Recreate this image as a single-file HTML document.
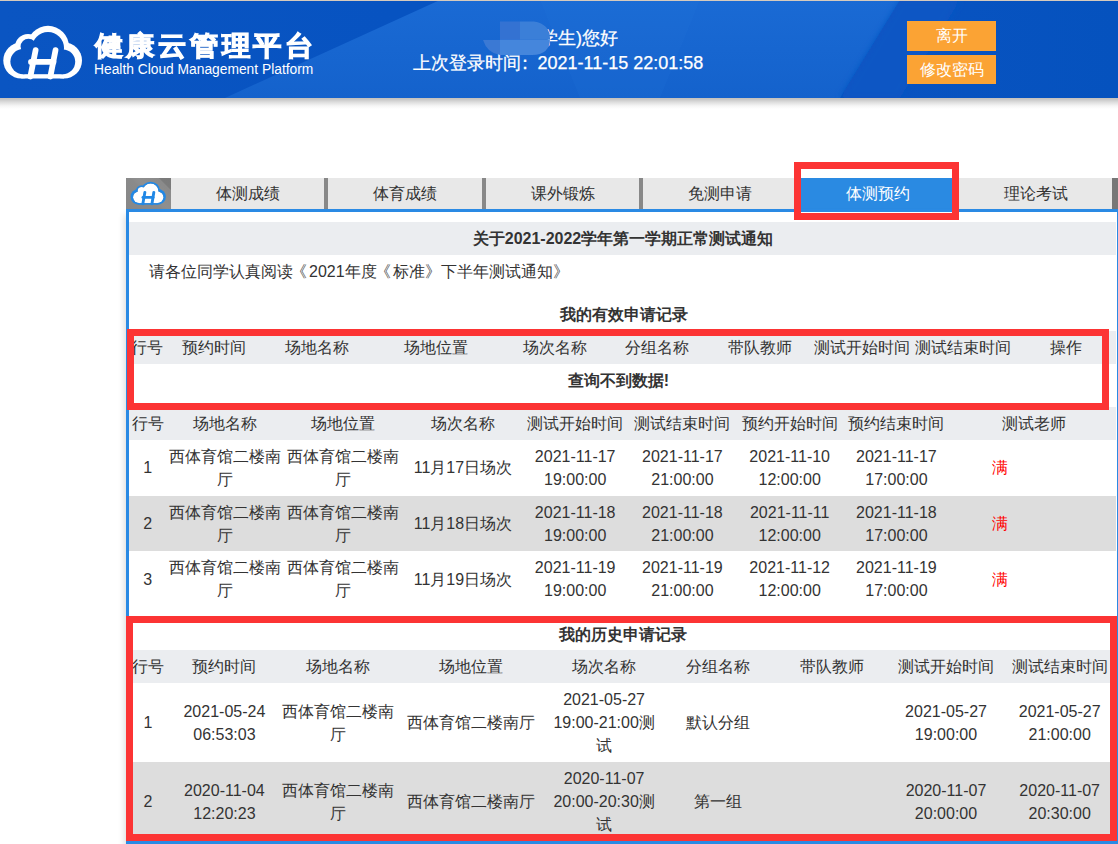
<!DOCTYPE html>
<html><head><meta charset="utf-8">
<style>
*{margin:0;padding:0;box-sizing:border-box}
html,body{width:1118px;height:844px;overflow:hidden;background:#fff}
body{font-family:"Liberation Sans",sans-serif;color:#333;font-size:16px;position:relative}
.abs{position:absolute}
#hdr{position:absolute;left:0;top:0;width:1118px;height:98px;background:#0a57c3;border-top:1px solid #d6cabd;overflow:hidden}
#hdrsh{position:absolute;left:0;top:98px;width:1118px;height:11px;background:linear-gradient(#c9c1b8 0px,#c4c4c4 1px,#dcdcdc 4px,#f6f6f6 8px,#fff 11px)}
.ttl{position:absolute;left:94.5px;top:26px;font-size:28px;font-weight:bold;color:#fff;letter-spacing:3.75px;-webkit-text-stroke:1.1px #fff;transform:scaleY(0.95);transform-origin:0 0;white-space:nowrap;line-height:40px}
.eng{position:absolute;left:94px;top:61px;font-size:13.8px;color:#fff;white-space:nowrap;line-height:16px}
.wel{position:absolute;color:#fff;font-size:18px;white-space:nowrap;line-height:20px;-webkit-text-stroke:0.25px #fff}
.btn{position:absolute;left:907px;width:89px;background:#fba334;color:#fff;font-size:16px;text-align:center}
/* tabs */
#tabs{position:absolute;left:126px;top:178px;height:31px;width:992px}
.tab{position:absolute;top:0;height:31px;background:#e8e8e8;text-align:center;line-height:31px;font-size:16px;color:#333}
.sep{position:absolute;top:0;height:31px;width:4px;background:#888}
#box{position:absolute;left:126px;top:209px;width:994px;height:635px;border:3px solid #2a8ae4;background:#fff;box-shadow:-1px 6px 7px rgba(0,0,0,0.16)}
.gbar{position:absolute;background:#ebedf0}
.row2{position:absolute;background:#dddddd}
.t{position:absolute;white-space:nowrap;text-align:center;line-height:23px;height:23px;width:320px;font-size:16px;color:#333}
.b{font-weight:bold}
.red{position:absolute;border:7px solid #fc3434}
.lb{position:relative;left:-2px}.rb{position:relative;left:0px}
</style></head>
<body>
<div id="hdr">
<svg class="abs" style="left:0;top:-1px" width="1118" height="98" viewBox="0 0 1118 98">
<defs><linearGradient id="hg" x1="0" x2="1" y1="0" y2="0">
<stop offset="0" stop-color="#0a55c2"/><stop offset="0.35" stop-color="#0753c1"/><stop offset="0.8" stop-color="#0853c1"/><stop offset="1" stop-color="#0552be"/></linearGradient>
<linearGradient id="hl" x1="0" x2="0" y1="0" y2="1"><stop offset="0" stop-color="#1a6ad4"/><stop offset="1" stop-color="#1462cc"/></linearGradient></defs>
<filter id="bl" x="-10%" y="-50%" width="120%" height="200%"><feGaussianBlur stdDeviation="3"/></filter>
<rect width="1118" height="98" fill="url(#hg)"/>
<polygon points="225,98 440,0 900,0 840,98" fill="url(#hl)"/>
<polygon points="840,98 900,0 960,0 900,98" fill="#0b57c4" filter="url(#bl)"/>
<polygon points="540,0 700,0 660,98 580,98" fill="#2a78dc" opacity="0.12"/>
</svg>
<svg class="abs" style="left:0;top:19px" width="90" height="70" viewBox="0 20 90 70">
<defs><mask id="cm" maskUnits="userSpaceOnUse" x="0" y="0" width="90" height="100">
<g fill="#fff"><circle cx="21.3" cy="60.5" r="18"/><circle cx="64" cy="60.5" r="18"/><circle cx="28" cy="47" r="13"/><circle cx="48" cy="46.8" r="21"/><rect x="21.3" y="46.8" width="42.7" height="31.7"/></g>
<g fill="#000"><circle cx="23" cy="61.6" r="12.6"/><circle cx="62.8" cy="61.8" r="12.4"/><circle cx="28.5" cy="46.6" r="7.9"/><circle cx="48" cy="48" r="16"/><rect x="23" y="48" width="39.8" height="26.2"/></g>
</mask></defs>
<rect x="0" y="20" width="90" height="70" fill="#fff" mask="url(#cm)"/>
<path d="M35.6,50.2 L30.4,76.5 M55.5,50.2 L50.4,76.5" stroke="#fff" stroke-width="5.8" stroke-linecap="round" fill="none"/>
<path d="M31,61.9 L53.5,61.9" stroke="#fff" stroke-width="5.8" stroke-linecap="round" fill="none"/>
</svg>
<div class="ttl">健康云管理平台</div>
<div class="eng">Health Cloud Management Platform</div>

<div class="wel" style="left:540px;top:27px">学生)您好</div>
<div class="wel" style="left:413px;top:52px">上次登录时间<span style="display:inline-block;width:16.5px;overflow:visible"><span style="position:relative;left:-5px">：</span></span>2021-11-15 22:01:58</div>
<svg class="abs" style="left:0;top:-1px" width="1118" height="98" viewBox="0 0 1118 98">
<defs><clipPath id="bc"><path d="M500,21.4 L534,21.4 Q550,24 550,38.6 Q550,55 532,55 L500,55 Q487,53 483,40 L500,40 Z"/></clipPath></defs>
<g clip-path="url(#bc)">
<rect x="480" y="20" width="20" height="40" fill="#3b79d4"/>
<rect x="500" y="20" width="20" height="19.7" fill="#3472d2"/>
<rect x="520" y="20" width="35" height="19.7" fill="#3b7fd8"/>
<rect x="500" y="39.7" width="55" height="20" fill="#4586dc"/>
</g></svg>
<div class="btn" style="top:20px;height:30px;line-height:30px">离开</div>
<div class="btn" style="top:54px;height:29px;line-height:29px">修改密码</div>
</div>
<div id="hdrsh"></div>

<div id="tabs">
<div class="tab" style="left:0;width:45px;background:linear-gradient(45deg,#878787 0%,#8a8a8a 45%,#8f8f8f 55%,#8a8a8a 83%,#7b7b7b 85%,#7a7a7a 100%)">
<svg class="abs" style="left:2.7px;top:2.1px" width="40.5" height="26.2" viewBox="0 22 90 60" preserveAspectRatio="none">
<defs><mask id="cm2" maskUnits="userSpaceOnUse" x="0" y="0" width="90" height="100">
<g fill="#fff"><circle cx="21.3" cy="60.5" r="18"/><circle cx="64" cy="60.5" r="18"/><circle cx="28" cy="47" r="13"/><circle cx="48" cy="46.8" r="21"/><rect x="21.3" y="46.8" width="42.7" height="31.7"/></g>
<g fill="#000"><circle cx="22.3" cy="61.6" r="13.2"/><circle cx="63.3" cy="61.6" r="13.2"/><circle cx="28" cy="47" r="8.8"/><circle cx="48" cy="47.6" r="17.4"/><rect x="22.3" y="47.6" width="41" height="27.4"/></g>
</mask></defs>
<g fill="#fff"><circle cx="22.3" cy="61.6" r="13.5"/><circle cx="63.3" cy="61.6" r="13.5"/><circle cx="28" cy="47" r="9"/><circle cx="48" cy="47.6" r="17.7"/><rect x="22.3" y="47.6" width="41" height="27.7"/></g>
<rect x="0" y="20" width="90" height="70" fill="#2188e6" mask="url(#cm2)"/>
<path d="M35.3,50.2 L30.8,76.5 M55.2,50.2 L51,76.5" stroke="#2188e6" stroke-width="6.4" stroke-linecap="round" fill="none"/>
<path d="M31,61.9 L53.5,61.9" stroke="#2188e6" stroke-width="6.4" stroke-linecap="round" fill="none"/>
</svg>
</div>
<div class="tab" style="left:45px;width:153px">体测成绩</div>
<div class="sep" style="left:198px"></div>
<div class="tab" style="left:202px;width:154px">体育成绩</div>
<div class="sep" style="left:356px"></div>
<div class="tab" style="left:360px;width:153px">课外锻炼</div>
<div class="sep" style="left:513px"></div>
<div class="tab" style="left:517px;width:154px">免测申请</div>
<div class="sep" style="left:671px"></div>
<div class="tab" style="left:675px;width:154px;height:34px;background:#2a8ae2;color:#fff">体测预约</div>
<div class="sep" style="left:829px"></div>
<div class="tab" style="left:833px;width:153px">理论考试</div>
<div class="tab" style="left:986px;width:6px;background:#777"></div>
</div>

<div id="box"></div>
<!--C-->
<div class="gbar" style="left:129px;top:222px;width:987px;height:33px"></div>
<div class="t b" style="left:463.0px;top:227.3px;">关于2021-2022学年第一学期正常测试通知</div>
<div class="t" style="left:149px;top:260.1px;text-align:left">请各位同学认真阅读<span class="lb">《</span>2021年度<span class="lb">《</span>标准<span class="rb">》</span>下半年测试通知<span class="rb">》</span></div>
<div class="t b" style="left:463.5px;top:303.3px;">我的有效申请记录</div>
<div class="gbar" style="left:129px;top:331px;width:987px;height:33px"></div>
<div class="t" style="left:-13.0px;top:336.0px;">行号</div>
<div class="t" style="left:54.4px;top:336.0px;">预约时间</div>
<div class="t" style="left:156.5px;top:336.0px;">场地名称</div>
<div class="t" style="left:276.1px;top:336.0px;">场地位置</div>
<div class="t" style="left:395.3px;top:336.0px;">场次名称</div>
<div class="t" style="left:496.7px;top:336.0px;">分组名称</div>
<div class="t" style="left:599.5px;top:336.0px;">带队教师</div>
<div class="t" style="left:701.5px;top:336.0px;">测试开始时间</div>
<div class="t" style="left:803.0px;top:336.0px;">测试结束时间</div>
<div class="t" style="left:905.9px;top:336.0px;">操作</div>
<div class="t b" style="left:458.3px;top:368.9px;">查询不到数据!</div>
<div class="gbar" style="left:129px;top:407px;width:987px;height:33px"></div>
<div class="t" style="left:-12.3px;top:412.0px;">行号</div>
<div class="t" style="left:64.6px;top:412.0px;">场地名称</div>
<div class="t" style="left:183.3px;top:412.0px;">场地位置</div>
<div class="t" style="left:302.9px;top:412.0px;">场次名称</div>
<div class="t" style="left:415.2px;top:412.0px;">测试开始时间</div>
<div class="t" style="left:522.4px;top:412.0px;">测试结束时间</div>
<div class="t" style="left:629.7px;top:412.0px;">预约开始时间</div>
<div class="t" style="left:736.4px;top:412.0px;">预约结束时间</div>
<div class="t" style="left:873.5px;top:412.0px;">测试老师</div>
<div class="row2" style="left:129px;top:495.7px;width:987px;height:55.7px"></div>
<div class="t" style="left:-12.3px;top:456.4px;">1</div>
<div class="t" style="left:64.6px;top:445.0px;">西体育馆二楼南</div>
<div class="t" style="left:64.6px;top:467.9px;">厅</div>
<div class="t" style="left:183.3px;top:445.0px;">西体育馆二楼南</div>
<div class="t" style="left:183.3px;top:467.9px;">厅</div>
<div class="t" style="left:302.9px;top:456.4px;">11月17日场次</div>
<div class="t" style="left:415.2px;top:445.0px;">2021-11-17</div>
<div class="t" style="left:415.2px;top:467.9px;">19:00:00</div>
<div class="t" style="left:522.4px;top:445.0px;">2021-11-17</div>
<div class="t" style="left:522.4px;top:467.9px;">21:00:00</div>
<div class="t" style="left:629.7px;top:445.0px;">2021-11-10</div>
<div class="t" style="left:629.7px;top:467.9px;">12:00:00</div>
<div class="t" style="left:736.4px;top:445.0px;">2021-11-17</div>
<div class="t" style="left:736.4px;top:467.9px;">17:00:00</div>
<div class="t" style="left:840.0px;top:456.4px;color:#ff0000">满</div>
<div class="t" style="left:-12.3px;top:512.1px;">2</div>
<div class="t" style="left:64.6px;top:500.7px;">西体育馆二楼南</div>
<div class="t" style="left:64.6px;top:523.6px;">厅</div>
<div class="t" style="left:183.3px;top:500.7px;">西体育馆二楼南</div>
<div class="t" style="left:183.3px;top:523.6px;">厅</div>
<div class="t" style="left:302.9px;top:512.1px;">11月18日场次</div>
<div class="t" style="left:415.2px;top:500.7px;">2021-11-18</div>
<div class="t" style="left:415.2px;top:523.6px;">19:00:00</div>
<div class="t" style="left:522.4px;top:500.7px;">2021-11-18</div>
<div class="t" style="left:522.4px;top:523.6px;">21:00:00</div>
<div class="t" style="left:629.7px;top:500.7px;">2021-11-11</div>
<div class="t" style="left:629.7px;top:523.6px;">12:00:00</div>
<div class="t" style="left:736.4px;top:500.7px;">2021-11-18</div>
<div class="t" style="left:736.4px;top:523.6px;">17:00:00</div>
<div class="t" style="left:840.0px;top:512.1px;color:#ff0000">满</div>
<div class="t" style="left:-12.3px;top:567.8px;">3</div>
<div class="t" style="left:64.6px;top:556.4px;">西体育馆二楼南</div>
<div class="t" style="left:64.6px;top:579.3px;">厅</div>
<div class="t" style="left:183.3px;top:556.4px;">西体育馆二楼南</div>
<div class="t" style="left:183.3px;top:579.3px;">厅</div>
<div class="t" style="left:302.9px;top:567.8px;">11月19日场次</div>
<div class="t" style="left:415.2px;top:556.4px;">2021-11-19</div>
<div class="t" style="left:415.2px;top:579.3px;">19:00:00</div>
<div class="t" style="left:522.4px;top:556.4px;">2021-11-19</div>
<div class="t" style="left:522.4px;top:579.3px;">21:00:00</div>
<div class="t" style="left:629.7px;top:556.4px;">2021-11-12</div>
<div class="t" style="left:629.7px;top:579.3px;">12:00:00</div>
<div class="t" style="left:736.4px;top:556.4px;">2021-11-19</div>
<div class="t" style="left:736.4px;top:579.3px;">17:00:00</div>
<div class="t" style="left:840.0px;top:567.8px;color:#ff0000">满</div>
<div class="t b" style="left:463.0px;top:622.5px;">我的历史申请记录</div>
<div class="gbar" style="left:129px;top:650px;width:987px;height:33px"></div>
<div class="t" style="left:-12.0px;top:655.0px;">行号</div>
<div class="t" style="left:64.4px;top:655.0px;">预约时间</div>
<div class="t" style="left:178.3px;top:655.0px;">场地名称</div>
<div class="t" style="left:311.3px;top:655.0px;">场地位置</div>
<div class="t" style="left:444.1px;top:655.0px;">场次名称</div>
<div class="t" style="left:558.0px;top:655.0px;">分组名称</div>
<div class="t" style="left:672.3px;top:655.0px;">带队教师</div>
<div class="t" style="left:786.0px;top:655.0px;">测试开始时间</div>
<div class="t" style="left:899.7px;top:655.0px;">测试结束时间</div>
<div class="row2" style="left:129px;top:762px;width:987px;height:79px"></div>
<div class="t" style="left:-12.0px;top:711.2px;">1</div>
<div class="t" style="left:64.4px;top:699.9px;">2021-05-24</div>
<div class="t" style="left:64.4px;top:722.8px;">06:53:03</div>
<div class="t" style="left:178.3px;top:699.9px;">西体育馆二楼南</div>
<div class="t" style="left:178.3px;top:722.8px;">厅</div>
<div class="t" style="left:311.3px;top:711.2px;">西体育馆二楼南厅</div>
<div class="t" style="left:444.1px;top:688.2px;">2021-05-27</div>
<div class="t" style="left:444.1px;top:711.1px;">19:00-21:00测</div>
<div class="t" style="left:444.1px;top:733.9px;">试</div>
<div class="t" style="left:558.0px;top:711.2px;">默认分组</div>
<div class="t" style="left:786.0px;top:699.9px;">2021-05-27</div>
<div class="t" style="left:786.0px;top:722.8px;">19:00:00</div>
<div class="t" style="left:899.7px;top:699.9px;">2021-05-27</div>
<div class="t" style="left:899.7px;top:722.8px;">21:00:00</div>
<div class="t" style="left:-12.0px;top:790.2px;">2</div>
<div class="t" style="left:64.4px;top:778.9px;">2020-11-04</div>
<div class="t" style="left:64.4px;top:801.8px;">12:20:23</div>
<div class="t" style="left:178.3px;top:778.9px;">西体育馆二楼南</div>
<div class="t" style="left:178.3px;top:801.8px;">厅</div>
<div class="t" style="left:311.3px;top:790.2px;">西体育馆二楼南厅</div>
<div class="t" style="left:444.1px;top:767.2px;">2020-11-07</div>
<div class="t" style="left:444.1px;top:790.1px;">20:00-20:30测</div>
<div class="t" style="left:444.1px;top:812.9px;">试</div>
<div class="t" style="left:558.0px;top:790.2px;">第一组</div>
<div class="t" style="left:786.0px;top:778.9px;">2020-11-07</div>
<div class="t" style="left:786.0px;top:801.8px;">20:00:00</div>
<div class="t" style="left:899.7px;top:778.9px;">2020-11-07</div>
<div class="t" style="left:899.7px;top:801.8px;">20:30:00</div>
<div class="red" style="left:127px;top:329px;width:982px;height:81px"></div>
<div class="red" style="left:794px;top:162px;width:165px;height:58px"></div>
<div class="red" style="left:126px;top:616px;width:991px;height:225px"></div>
</body></html>
